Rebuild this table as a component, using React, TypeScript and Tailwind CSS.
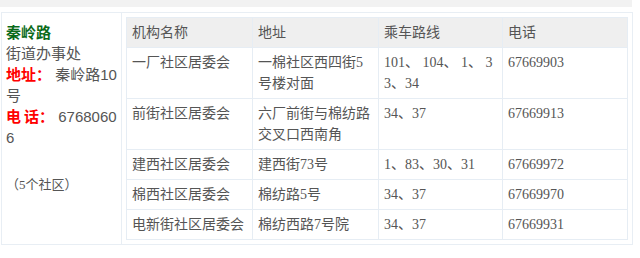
const rows = [
  { name: "一厂社区居委会", addr: "一棉社区西四街5号楼对面", bus: "101、 104、 1、 33、34", tel: "67669903" },
  { name: "前街社区居委会", addr: "六厂前街与棉纺路交叉口西南角", bus: "34、37", tel: "67669913" },
  { name: "建西社区居委会", addr: "建西街73号", bus: "1、83、30、31", tel: "67669972" },
  { name: "棉西社区居委会", addr: "棉纺路5号", bus: "34、37", tel: "67669970" },
  { name: "电新街社区居委会", addr: "棉纺西路7号院", bus: "34、37", tel: "67669931" },
];

const cell = "border border-[#e6edf4] px-[5px] py-[4px] align-top break-all";

export default function App() {
  return (
    <div className="w-[640px] h-[258px] bg-white overflow-hidden">
      <div className="h-[7px] w-[632px] bg-[#f2f2f2]" />
      <div className="mt-[5px] ml-[1px] w-[632px] flex border border-[#e8eef4]">
        <div className="w-[120px] shrink-0 border-r border-[#e8eef4] pl-[4px] pr-[1px] pt-[9px] text-[15px] leading-[21px] text-[#555] break-all font-['Liberation_Sans','Noto_Sans_CJK_SC',sans-serif]">
          <div className="font-bold text-[#0b6b1a]">秦岭路</div>
          <div>街道办事处</div>
          <div>
            <span className="font-bold text-[#ff0000]">地址：</span> 秦岭路10号
          </div>
          <div>
            <span className="font-bold text-[#ff0000]">
              电<span className="ml-[3px]">话：</span>
            </span>{" "}
            67680606
          </div>
          <div className="mt-[26px] text-[13px] font-['Liberation_Serif','Noto_Sans_CJK_SC',serif]">（5个社区）</div>
        </div>
        <div className="p-[4px] flex-1">
          <table className="table-fixed border-collapse w-[501px] text-[14px] leading-[21px] text-[#555] font-['Liberation_Serif','Noto_Sans_CJK_SC',serif]">
            <colgroup>
              <col className="w-[126px]" />
              <col className="w-[126px]" />
              <col className="w-[124px]" />
              <col className="w-[125px]" />
            </colgroup>
            <thead>
              <tr className="bg-[#efefef] text-left">
                <th className={cell + " font-normal"}>机构名称</th>
                <th className={cell + " font-normal"}>地址</th>
                <th className={cell + " font-normal"}>乘车路线</th>
                <th className={cell + " font-normal"}>电话</th>
              </tr>
            </thead>
            <tbody>
              {rows.map((r) => (
                <tr key={r.name}>
                  <td className={cell}>{r.name}</td>
                  <td className={cell}>{r.addr}</td>
                  <td className={cell}>{r.bus}</td>
                  <td className={cell}>{r.tel}</td>
                </tr>
              ))}
            </tbody>
          </table>
        </div>
      </div>
    </div>
  );
}
